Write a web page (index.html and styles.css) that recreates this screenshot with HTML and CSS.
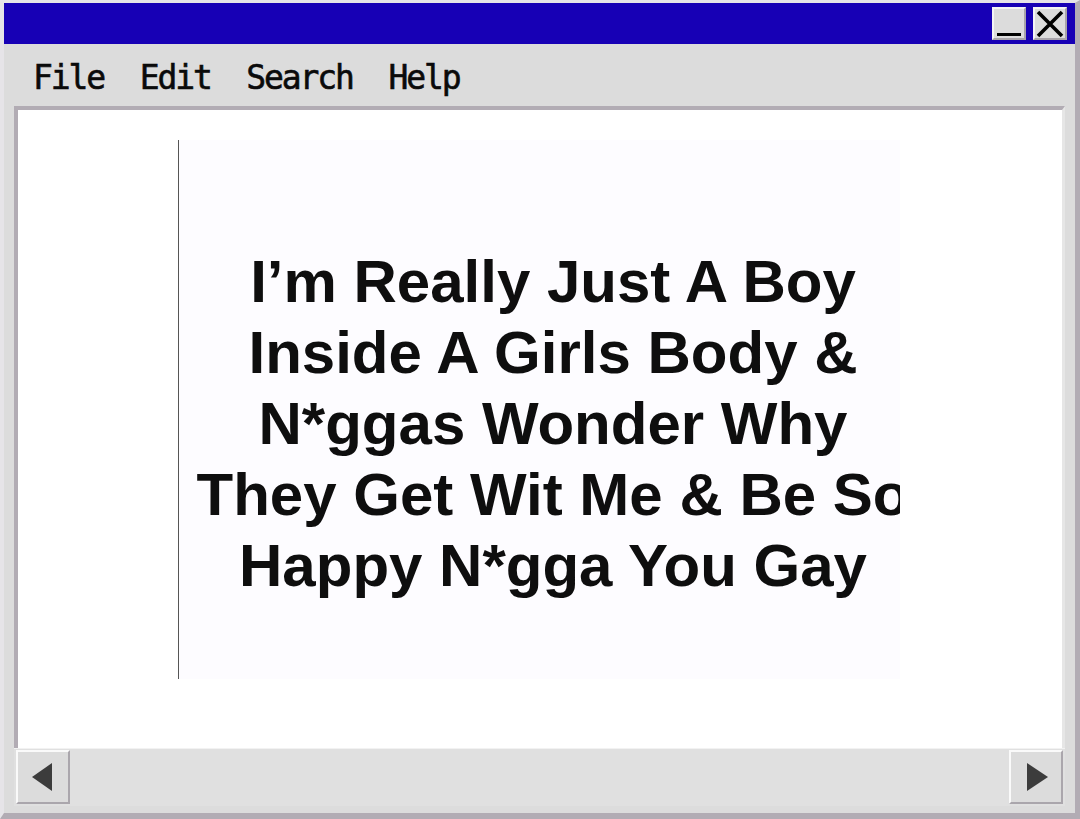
FILE: index.html
```html
<!DOCTYPE html>
<html lang="en">
<head>
  <meta charset="UTF-8">
  <title>Viewer</title>
  <link rel="stylesheet" href="styles.css">
</head>
<body>

<div class="window">
  <!-- Barra de titulo -->
  <div class="titlebar">
    <button class="win-btn btn-min"><span class="min-bar"></span></button>
    <button class="win-btn btn-close">
      <svg width="30" height="30" viewBox="0 0 30 30">
        <path d="M3 3 L27 27 M27 3 L3 27" stroke="#000" stroke-width="3.6" fill="none"/>
      </svg>
    </button>
  </div>

  <!-- Menu -->
  <div class="menubar"><span>File</span>  <span>Edit</span>  <span>Search</span>  <span>Help</span></div>

  <!-- Area de contenido -->
  <div class="view">
    <div class="picture">
      <div class="picture-text">
        <div>I’m Really Just A Boy</div>
        <div>Inside A Girls Body &amp;</div>
        <div>N*ggas Wonder Why</div>
        <div>They Get Wit Me &amp; Be So</div>
        <div>Happy N*gga You Gay</div>
      </div>
    </div>
  </div>

  <!-- Scroll horizontal -->
  <div class="scrollbar">
    <button class="scroll-btn"><span class="arrow arrow-left"></span></button>
    <div class="track"></div>
    <button class="scroll-btn"><span class="arrow arrow-right"></span></button>
  </div>
</div>

</body>
</html>
```

FILE: styles.css
```css
body {
  margin: 0;
  background: #dcdcdc;
}

.window {
  box-sizing: border-box;
  width: 1080px;
  height: 819px;
  background: #dcdcdc;
  border-style: solid;
  border-width: 3px 5px 6px 4px;
  border-color: #e6e4e8 #b2acb4 #b2acb4 #e6e4e8;
}

.titlebar {
  height: 41px;
  background: #1700b5;
  display: flex;
  justify-content: flex-end;
  align-items: center;
  gap: 7px;
  padding-right: 8px;
}

.win-btn {
  box-sizing: border-box;
  width: 34px;
  height: 33px;
  padding: 0;
  background: #dcdcdc;
  border-style: solid;
  border-width: 2px;
  border-color: #f4f4f4 #a8a4aa #a8a4aa #f4f4f4;
  display: flex;
  align-items: center;
  justify-content: center;
  position: relative;
}

.min-bar {
  position: absolute;
  left: 3px;
  bottom: 2px;
  width: 24px;
  height: 3px;
  background: #000;
}

.menubar {
  box-sizing: border-box;
  height: 62px;
  padding: 15px 0 0 29px;
  font-family: 'DejaVu Sans Mono', monospace;
  font-size: 33px;
  letter-spacing: -2.1px;
  line-height: 38px;
  color: #0a0a0a;
  -webkit-text-stroke: 0.6px #0a0a0a;
  white-space: pre;
}

.view {
  box-sizing: border-box;
  height: 642px;
  margin: 0 10px;
  background: #fff;
  border-style: solid;
  border-width: 4px 3px 0 4px;
  border-color: #b2acb4 #e6e6e6 #e6e6e6 #b2acb4;
  padding: 30px 0 0 160px;
  overflow: hidden;
}

.picture {
  width: 721px;
  height: 539px;
  background: #fdfcff;
  border-left: 1px solid #555;
  overflow: hidden;
}

.picture-text {
  width: 748px;
  padding-top: 106px;
  text-align: center;
  white-space: nowrap;
  font-family: 'Liberation Sans', Arial, sans-serif;
  font-weight: bold;
  font-size: 60px;
  line-height: 71px;
  color: #0e0e0e;
}

.scrollbar {
  box-sizing: border-box;
  height: 58px;
  margin: 0 10px;
  padding: 2px;
  background: #e0e0e0;
  border-top: 1px solid #f2f2f2;
  display: flex;
}

.track {
  flex: 1;
}

.scroll-btn {
  box-sizing: border-box;
  width: 54px;
  height: 54px;
  margin-top: -1px;
  padding: 0;
  background: #dcdcdc;
  border-style: solid;
  border-width: 2px;
  border-color: #fafafa #aaa6ac #aaa6ac #fafafa;
  display: flex;
  align-items: center;
  justify-content: center;
}

.arrow {
  width: 0;
  height: 0;
  border-top: 14px solid transparent;
  border-bottom: 14px solid transparent;
}

.arrow-left {
  border-right: 20px solid #3c3c3c;
  margin-right: 2px;
}

.arrow-right {
  border-left: 21px solid #3c3c3c;
  margin-left: 2px;
}
```
